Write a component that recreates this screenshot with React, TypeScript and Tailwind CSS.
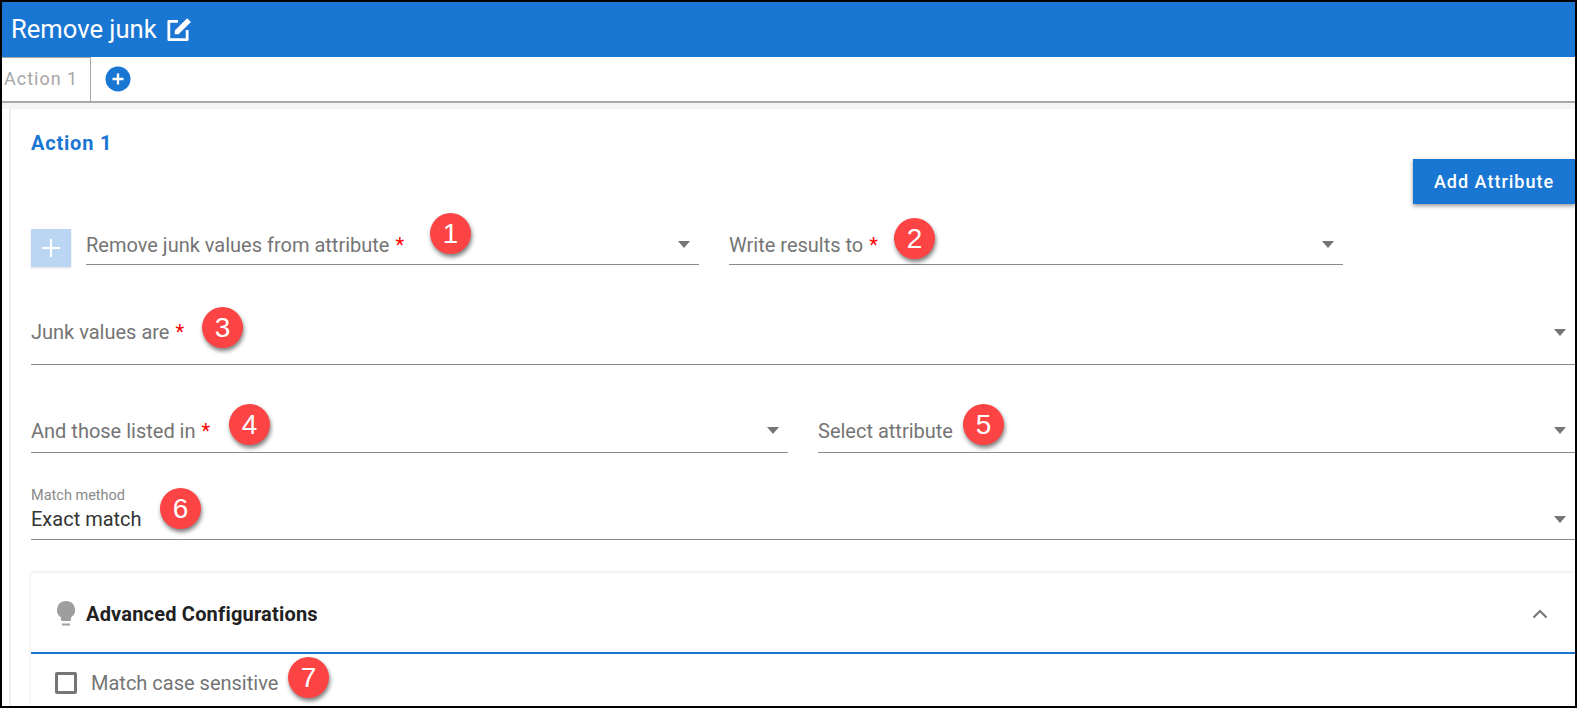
import React from "react";

const Caret = () => (
  <svg width="12" height="7" viewBox="0 0 12 7" className="shrink-0">
    <path d="M0 0h12L6 7z" fill="#757575" />
  </svg>
);

const Badge = ({ n, className }: { n: number; className: string }) => (
  <div
    className={`absolute flex h-[41px] w-[41px] items-center justify-center rounded-full bg-[#fd4444] font-['Liberation_Sans',sans-serif] text-[28px] text-white shadow-[1px_3px_4px_rgba(0,0,0,0.5)] ${className}`}
  >
    {n}
  </div>
);

type FieldProps = {
  label: string;
  required?: boolean;
  className: string;
};

const Field = ({ label, required, className }: FieldProps) => (
  <div className={`flex items-center justify-between border-b-[1.5px] border-[#8c8c8c] pr-[9px] ${className}`}>
    <span className="text-[20px] leading-[24px] text-[#757575]">
      {label}
      {required && <span className="ml-[6px] text-[#f00]">*</span>}
    </span>
    <Caret />
  </div>
);

export default function App() {
  return (
    <div className="relative h-[708px] w-[1577px] overflow-hidden border-2 border-black bg-white font-['Roboto',sans-serif]">
      <header className="flex h-[55px] items-center gap-[7px] bg-[#1976d2] pl-[9px] text-white">
        <h1 className="text-[25.6px] leading-none">Remove junk</h1>
        <svg width="28" height="28" viewBox="0 0 26 26" fill="none" className="mt-[1px]">
          <path d="M13 5H4.500v17h17v-9" stroke="#fff" strokeWidth="2.600" strokeLinejoin="round" />
          <path d="M21.500 2 25 5.500 13.500 17H10v-3.500z" fill="#fff" />
        </svg>
      </header>

      <div className="flex h-[46px] items-stretch border-b-2 border-[#a8a8a8]">
        <div className="flex w-[89px] items-center border-r-[1.500px] border-t-[1.500px] border-[#a8a8a8] pb-[2px] pl-[2px] text-[18px] tracking-[1px] text-[#a6a6a6]">
          Action 1
        </div>
        <div className="ml-[14px] flex items-center">
          <svg width="26" height="26" viewBox="0 0 26 26">
            <circle cx="13" cy="13" r="12.500" fill="#1976d2" />
            <path d="M13 7.500v11M7.500 13h11" stroke="#fff" strokeWidth="2.400" />
          </svg>
        </div>
      </div>
      <div className="h-[6px] bg-[#f5f5f5]" />

      <main className="ml-[7px] h-[600px] border-l-2 border-[#eeeeee] bg-white pl-[20px]">
        <h2 className="pt-[22px] text-[20px] font-bold leading-[24px] tracking-[0.8px] text-[#1976d2]">Action 1</h2>

        <div className="mt-[4px] flex justify-end">
          <button className="h-[45px] w-[162px] bg-[#1976d2] text-[18px] font-medium tracking-[1px] text-white shadow-[0_2px_4px_rgba(0,0,0,0.4)]">
            Add Attribute
          </button>
        </div>

        <div className="mt-[25px] flex items-start">
          <div className="flex h-[38px] w-[40px] items-center justify-center bg-[#bbd6f2] shadow-[0_1px_2px_rgba(0,0,0,0.15)]">
            <svg width="20" height="20" viewBox="0 0 20 20">
              <path d="M10 1v18M1 10h18" stroke="#fff" strokeWidth="2.200" />
            </svg>
          </div>
          <Field label="Remove junk values from attribute" required className="ml-[15px] h-[36px] w-[613px] pb-[4px]" />
          <Field label="Write results to" required className="ml-[30px] h-[36px] w-[614px] pb-[4px]" />
        </div>

        <Field label="Junk values are" required className="mt-[54px] h-[44px] w-full pb-[21px]" />

        <div className="mt-[44px] flex gap-[30px]">
          <Field label="And those listed in" required className="h-[44px] w-[757px]" />
          <Field label="Select attribute" className="h-[44px] flex-1" />
        </div>

        <div className="mt-[33px] flex h-[54px] items-end justify-between border-b-[1.500px] border-[#8c8c8c] pb-[8px] pr-[9px]">
          <div>
            <div className="text-[14.500px] leading-[16px] text-[#8a8a8a]">Match method</div>
            <div className="mt-[3px] text-[20px] leading-[24px] text-[#333]">Exact match</div>
          </div>
          <div className="pb-[8px]">
            <Caret />
          </div>
        </div>

        <section className="mt-[33px] h-[200px] shadow-[0_-1px_3px_rgba(0,0,0,0.1)]">
          <div className="flex h-[81px] items-center justify-between border-b-2 border-[#1976d2] pl-[26px] pr-[27px] pt-[2px]">
            <div className="flex items-center gap-[11px]">
              <svg width="18" height="25" viewBox="0 0 18 25">
                <path d="M9 0a9 9 0 0 0-5 16.500V19a1 1 0 0 0 1 1h8a1 1 0 0 0 1-1v-2.500A9 9 0 0 0 9 0z" fill="#9e9e9e" />
                <path d="M5 22.500h8v2H5z" fill="#9e9e9e" />
              </svg>
              <span className="text-[20px] font-bold leading-[24px] tracking-[0.2px] text-[#212121]">Advanced Configurations</span>
            </div>
            <svg width="16" height="10" viewBox="0 0 16 10" fill="none">
              <path d="M1.500 8.500 8 2l6.500 6.500" stroke="#757575" strokeWidth="2" />
            </svg>
          </div>
          <div className="flex items-center gap-[14px] pl-[24px] pt-[17px]">
            <div className="h-[22px] w-[22px] rounded-[2px] border-[3px] border-[#757575]" />
            <span className="text-[20px] leading-[24px] text-[#757575]">Match case sensitive</span>
          </div>
        </section>
      </main>

      <Badge n={1} className="left-[428px] top-[211px]" />
      <Badge n={2} className="left-[892px] top-[216px]" />
      <Badge n={3} className="left-[200px] top-[305px]" />
      <Badge n={4} className="left-[227px] top-[402px]" />
      <Badge n={5} className="left-[961px] top-[402px]" />
      <Badge n={6} className="left-[158px] top-[486px]" />
      <Badge n={7} className="left-[286px] top-[655px]" />
    </div>
  );
}
